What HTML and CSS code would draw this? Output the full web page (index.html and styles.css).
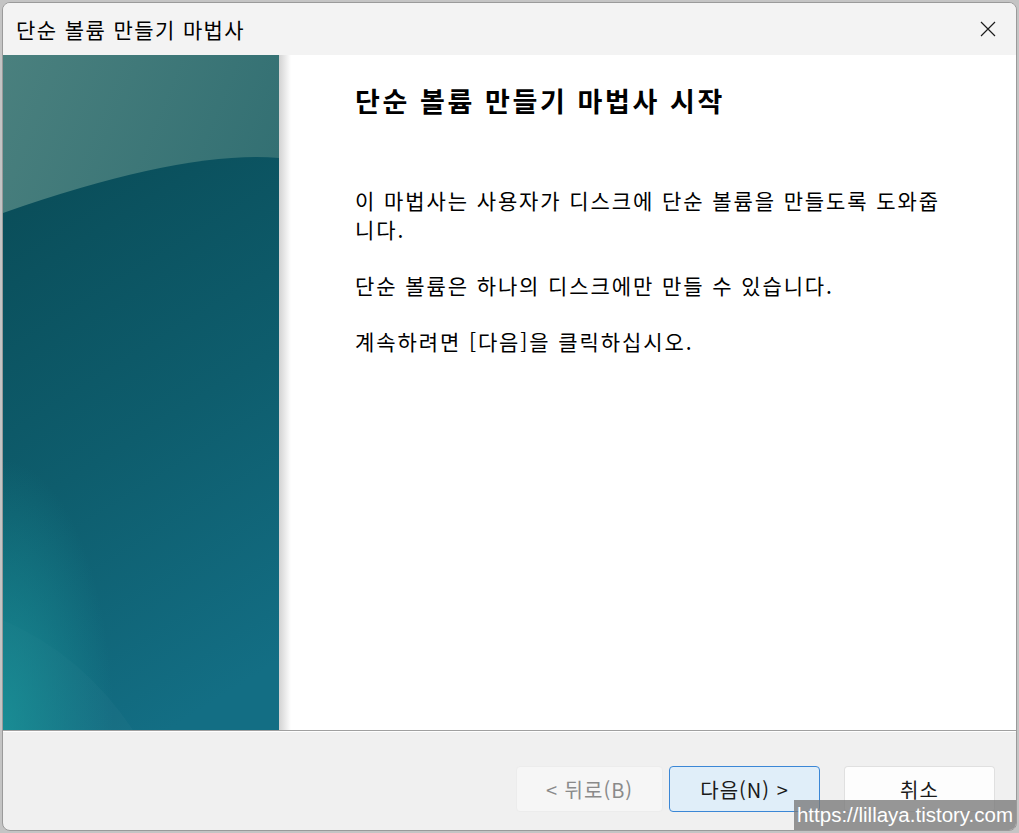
FILE: index.html
```html
<!DOCTYPE html>
<html lang="ko">
<head>
  <meta charset="UTF-8">
  <meta name="viewport" content="width=device-width, initial-scale=1.0">
  <title>단순 볼륨 만들기 마법사</title>
  <link rel="stylesheet" href="styles.css">
</head>
<body>
  <div class="wizard-window">
    <div class="title-bar">
      <span class="title-text">단순 볼륨 만들기 마법사</span>
      <button class="close-button" aria-label="닫기">
        <svg width="16" height="16" viewBox="0 0 16 16">
          <path d="M1 1 L15 15 M15 1 L1 15" stroke="#1b1b1b" stroke-width="1.2" fill="none"/>
        </svg>
      </button>
    </div>

    <div class="wizard-body">
      <!-- left banner -->
      <div class="side-banner">
        <svg class="banner-art" viewBox="0 0 276 675" preserveAspectRatio="none">
          <defs>
            <linearGradient id="topGlow" x1="0" y1="0" x2="1" y2="1">
              <stop offset="0" stop-color="#4a807e"/>
              <stop offset="1" stop-color="#22646b"/>
            </linearGradient>
            <linearGradient id="deepSea" x1="0.3" y1="0" x2="0.6" y2="1">
              <stop offset="0" stop-color="#0a4e5a"/>
              <stop offset="0.5" stop-color="#0e5d6d"/>
              <stop offset="1" stop-color="#136e84"/>
            </linearGradient>
            <radialGradient id="cornerGlow" cx="0" cy="1" r="0.4">
              <stop offset="0" stop-color="#1a9298" stop-opacity="0.85"/>
              <stop offset="1" stop-color="#1a9298" stop-opacity="0"/>
            </radialGradient>
          </defs>
          <rect width="276" height="675" fill="url(#topGlow)"/>
          <path d="M0 158 Q 180 95 276 103 L276 675 L0 675 Z" fill="url(#deepSea)"/>
          <path d="M0 565 Q 80 600 130 675 L0 675 Z" fill="#ffffff" opacity="0.025"/>
          <rect width="276" height="675" fill="url(#cornerGlow)"/>
        </svg>
      </div>
      <div class="banner-shadow"></div>

      <div class="wizard-content">
        <h1 class="wizard-heading">단순 볼륨 만들기 마법사 시작</h1>
        <p class="wizard-text">이 마법사는 사용자가 디스크에 단순 볼륨을 만들도록 도와줍<br>니다.</p>
        <p class="wizard-text">단순 볼륨은 하나의 디스크에만 만들 수 있습니다.</p>
        <p class="wizard-text">계속하려면 [다음]을 클릭하십시오.</p>
      </div>
    </div>

    <div class="wizard-footer">
      <button class="wizard-button is-disabled">&lt; 뒤로(B)</button>
      <button class="wizard-button is-default">다음(N) &gt;</button>
      <button class="wizard-button cancel">취소</button>
    </div>

    <div class="watermark">https://lillaya.tistory.com</div>
  </div>
</body>
</html>
```

FILE: styles.css
```css
body {
  margin: 0;
  padding: 0;
  background-color: #c4c4c4;
  font-family: "Noto Sans CJK KR", "Noto Sans", sans-serif;
  color: #000;
}

.wizard-window {
  position: relative;
  box-sizing: border-box;
  width: 1015px;
  height: 829px;
  margin: 2px 0 0 2px;
  border: 1px solid #9a9a9a;
  border-radius: 8px;
  overflow: hidden;
  background-color: #f0f0f0;
  display: flex;
  flex-direction: column;
}

.title-bar {
  height: 52px;
  flex-shrink: 0;
  background-color: #f3f3f3;
  display: flex;
  align-items: center;
  justify-content: space-between;
  padding-left: 13px;
}

.title-text {
  font-size: 21px;
  letter-spacing: 1.4px;
}

.close-button {
  width: 46px;
  height: 52px;
  margin-right: 5px;
  border: none;
  background: transparent;
  display: flex;
  align-items: center;
  justify-content: center;
  padding: 0;
}

.wizard-body {
  height: 675px;
  flex-shrink: 0;
  display: flex;
  background-color: #fff;
  border-bottom: 1px solid #a0a0a0;
  box-shadow: 0 1px 0 #ffffff;
}

.side-banner {
  width: 276px;
  flex-shrink: 0;
}

.banner-art {
  display: block;
  width: 100%;
  height: 100%;
}

.banner-shadow {
  width: 12px;
  flex-shrink: 0;
  background: linear-gradient(to right, #d2d2d2, #ffffff);
}

.wizard-content {
  padding: 30px 0 0 64px;
}

.wizard-heading {
  margin: 0 0 69px;
  font-size: 27px;
  font-weight: bold;
  line-height: 32px;
  letter-spacing: 2.6px;
}

.wizard-text {
  margin: 0 0 27px;
  font-size: 21px;
  line-height: 29px;
  letter-spacing: 1.9px;
}

.wizard-footer {
  flex: 1;
  margin-top: 1px;
  display: flex;
  justify-content: flex-end;
  align-items: flex-start;
  padding: 34px 21px 0 0;
}

.wizard-button {
  height: 46px;
  width: 151px;
  border-radius: 4px;
  font-family: inherit;
  font-size: 20px;
  letter-spacing: 1px;
  border: 1px solid #e0e0e0;
  border-bottom-color: #cfcfcf;
  background-color: #fdfdfd;
  color: #1a1a1a;
  padding: 0;
}

.wizard-button.is-disabled {
  width: 147px;
  margin-right: 6px;
  background-color: #f6f6f6;
  border-color: #ececec;
  color: #8a8a8a;
}

.wizard-button.is-default {
  margin-right: 24px;
  background-color: #e0eef9;
  border-color: #3b87d6;
}

.watermark {
  position: absolute;
  right: 0;
  bottom: 0;
  width: 222px;
  height: 30px;
  background-color: rgba(120, 120, 120, 0.78);
  color: #fff;
  font-family: "Liberation Sans", Arial, sans-serif;
  font-size: 20.5px;
  line-height: 30px;
  text-align: center;
}
```
